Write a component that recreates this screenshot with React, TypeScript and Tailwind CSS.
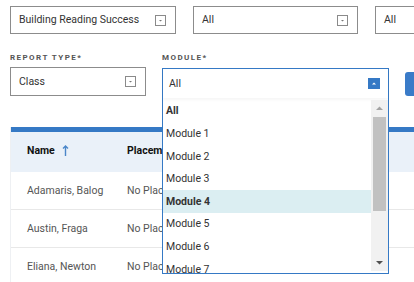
import React from 'react';

const BLUE = '#3579c5';

function CaretBox() {
  return (
    <svg width="11" height="11" viewBox="0 0 11 11" className="shrink-0">
      <rect x="0.5" y="0.5" width="10" height="10" fill="white" stroke="#8a8a8a" />
      <path d="M4 5 L7 5 L5.5 6.5 Z" fill="#777" />
    </svg>
  );
}

function SelectBox({ label, width, children }: { label: string; width: string; children?: React.ReactNode }) {
  return (
    <div className={`flex shrink-0 items-center justify-between border border-[#8c8c8c] pl-[8px] pr-[9px] text-[10.5px] text-[#333] ${width}`}>
      <span className="whitespace-nowrap">{label}</span>
      {children}
    </div>
  );
}

const modules = ['All', 'Module 1', 'Module 2', 'Module 3', 'Module 4', 'Module 5', 'Module 6', 'Module 7'];
const rows = ['Adamaris, Balog', 'Austin, Fraga', 'Eliana, Newton'];

export default function App() {
  return (
    <div className="relative w-[414px] h-[282px] overflow-hidden bg-white" style={{ fontFamily: 'Roboto, "Liberation Sans", sans-serif' }}>
      {/* top filters */}
      <div className="flex gap-[17px] pt-[6px] pl-[10px]">
        <SelectBox label="Building Reading Success" width="w-[166px] h-[28px]"><CaretBox /></SelectBox>
        <SelectBox label="All" width="w-[165px] h-[28px]"><CaretBox /></SelectBox>
        <SelectBox label="All" width="w-[120px] h-[28px]" />
      </div>

      {/* report type / module */}
      <div className="flex items-end pl-[10px] mt-[19px]">
        <div className="flex shrink-0 flex-col gap-[5px] w-[136px]">
          <span className="text-[8px] leading-[9px] font-bold tracking-[0.18em] text-[#555]">REPORT TYPE*</span>
          <SelectBox label="Class" width="w-[136px] h-[29px]"><CaretBox /></SelectBox>
        </div>
        <div className="flex shrink-0 flex-col gap-[5px] ml-[16px] w-[227px]">
          <span className="text-[8px] leading-[9px] font-bold tracking-[0.18em] text-[#555]">MODULE*</span>
          <div className="h-[29px]" />
        </div>
        <div className="ml-[16px] shrink-0 h-[24px] w-[30px] rounded-[3px] bg-[#3a7bc8]" />
      </div>

      {/* table */}
      <div className="mt-[31px] ml-[10px] border-l border-[#eef0f3]">
        <div className="h-[5px]" style={{ backgroundColor: BLUE }} />
        <div className="flex items-center h-[40px] pb-[2px] bg-[#eaf1f9] text-[10.5px] font-bold text-[#111]">
          <div className="w-[116px] pl-[16px] flex items-center gap-[7px]">
            Name
            <svg width="7" height="12" viewBox="0 0 7 12">
              <path d="M3.5 1 L3.5 11 M1 3.5 L3.5 1 L6 3.5" stroke="#4a86c9" strokeWidth="1.4" fill="none" />
            </svg>
          </div>
          <div>Placement</div>
        </div>
        {rows.map((r) => (
          <div key={r} className="flex items-center h-[38px] border-b border-[#e8e8e8] text-[10.5px] text-[#555]">
            <div className="w-[116px] pl-[16px]">{r}</div>
            <div>No Placement</div>
          </div>
        ))}
      </div>

      {/* open module dropdown */}
      <div className="absolute left-[162px] top-[68px] w-[227px] h-[206px] bg-white border flex flex-col" style={{ borderColor: BLUE }}>
        <div className="flex items-center justify-between h-[29px] pl-[6px] pr-[8px] text-[10.5px] text-[#333] shadow-[0_2px_3px_rgba(0,0,0,0.04)]">
          <span>All</span>
          <svg width="12" height="11" viewBox="0 0 12 11">
            <rect width="12" height="11" fill={BLUE} />
            <path d="M4 6.5 L8 6.5 L6 4.5 Z" fill="white" />
          </svg>
        </div>
        <div className="flex flex-1 mt-[2px] overflow-hidden">
          <div className="flex-1 flex flex-col">
            {modules.map((m) => (
              <div
                key={m}
                className={`h-[22.6px] shrink-0 flex items-center pl-[3px] text-[10.5px] text-[#333] ${m === 'All' || m === 'Module 4' ? 'font-bold' : ''} ${m === 'Module 4' ? 'bg-[#dbeef2]' : ''}`}
              >
                {m}
              </div>
            ))}
          </div>
          <div className="w-[17px] h-[171px] bg-[#f1f1f1] flex flex-col items-center">
            <svg width="17" height="17" viewBox="0 0 17 17">
              <path d="M5 10 L12 10 L8.5 6.5 Z" fill="#a3a3a3" />
            </svg>
            <div className="w-[13px] h-[94px] bg-[#c1c1c1]" />
            <div className="flex-1" />
            <svg width="17" height="17" viewBox="0 0 17 17">
              <path d="M5 7 L12 7 L8.5 10.5 Z" fill="#505050" />
            </svg>
          </div>
        </div>
      </div>
    </div>
  );
}
